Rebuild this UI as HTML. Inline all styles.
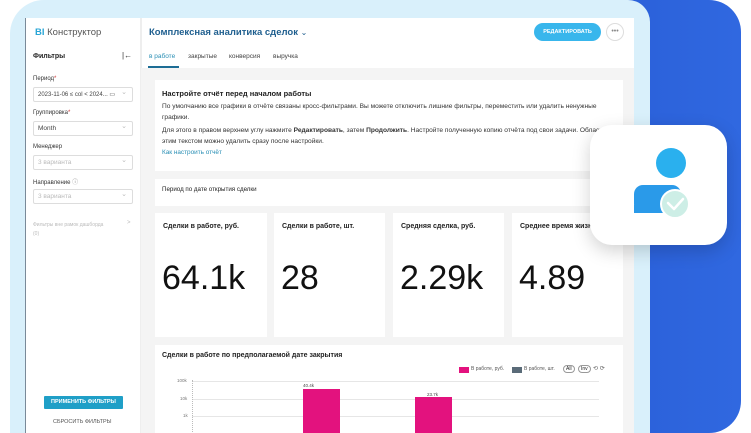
<!DOCTYPE html>
<html><head><meta charset="utf-8"><style>
*{margin:0;padding:0;box-sizing:border-box}
html,body{width:751px;height:433px;overflow:hidden}
body{background:#fff;font-family:"Liberation Sans","Noto Sans CJK SC",sans-serif;color:#222;position:relative}
.abs{position:absolute}
.blue{left:600px;top:0;width:141px;height:433px;background:linear-gradient(90deg,#2a5fd8,#3068e0);border-radius:0 32px 32px 0}
.frame{left:10px;top:0;width:640px;height:433px;background:#d9f0fb;border-radius:34px 22px 0 0}
.app{left:25px;top:18px;width:609px;height:415px;background:#fff;border-left:1px solid #7a8a99}
.side{left:25px;top:18px;width:116px;height:415px;border-right:1px solid #eee}
.main{left:141px;top:68px;width:493px;height:365px;background:#f4f4f4}
.card{background:#fff;position:absolute}
.lbl{font-size:6px;color:#333;position:absolute;left:33px}
.inp{position:absolute;left:33px;width:100px;height:15px;border:1px solid #ddd;border-radius:2px;font-size:6.5px;padding:3px 4px;color:#444}
.inp.g{color:#bbb}
.inp:after{content:"⌄";position:absolute;right:5px;top:0;color:#bbb;font-size:7px}
.kt{font-size:7px;font-weight:bold;position:absolute;left:8px;top:10px;white-space:nowrap}
.kv{font-size:34px;position:absolute;left:7px;top:46px;color:#111}
</style></head><body>
<div class="abs blue"></div>
<div class="abs frame"></div>
<div class="abs app"></div>
<div class="abs side"></div>
<div class="abs" style="left:35px;top:27px;font-size:9.5px;color:#555"><b style="color:#2aa6d6">BI</b> Конструктор</div>
<div class="abs" style="left:33px;top:53px;font-size:7px;font-weight:bold">Фильтры</div>
<div class="abs" style="left:122px;top:51px;font-size:8px;color:#333">|←</div>
<div class="lbl" style="top:76px">Период<span style="color:#c33">*</span></div>
<div class="inp" style="top:87px;font-size:6px">2023-11-06 ≤ col &lt; 2024... ▭</div>
<div class="lbl" style="top:110px">Группировка<span style="color:#c33">*</span></div>
<div class="inp" style="top:121px">Month</div>
<div class="lbl" style="top:144px">Менеджер</div>
<div class="inp g" style="top:155px">3 варианта</div>
<div class="lbl" style="top:177px">Направление <span style="color:#888">ⓘ</span></div>
<div class="inp g" style="top:189px">3 варианта</div>
<div class="abs" style="left:33px;top:221px;font-size:5px;color:#bbb;line-height:9px">Фильтры вне рамок дашборда<br>(0)</div>
<div class="abs" style="left:127px;top:220px;font-size:6px;color:#bbb">&gt;</div>
<div class="abs" style="left:44px;top:396px;width:79px;height:13px;background:#1f9fc7;color:#fff;font-size:5.5px;font-weight:bold;text-align:center;line-height:13px;border-radius:1px">ПРИМЕНИТЬ ФИЛЬТРЫ</div>
<div class="abs" style="left:53px;top:419px;font-size:5.5px;color:#555">СБРОСИТЬ ФИЛЬТРЫ</div>
<div class="abs" style="left:141px;top:18px;width:1px;height:50px;background:#eee"></div>
<div class="abs" style="left:149px;top:27px;font-size:9.5px;color:#1f5f8f;font-weight:bold">Комплексная аналитика сделок <span style="font-weight:normal;font-size:8px">⌄</span></div>
<div class="abs" style="left:534px;top:23px;width:67px;height:18px;background:#38b6ec;border-radius:9px;color:#fff;font-size:5.5px;font-weight:bold;text-align:center;line-height:18px">РЕДАКТИРОВАТЬ</div>
<div class="abs" style="left:606px;top:23px;width:18px;height:18px;border:1px solid #ddd;border-radius:50%;font-size:7px;color:#888;text-align:center;line-height:15px">•••</div>
<div class="abs" style="left:149px;top:53px;font-size:6.5px;color:#2a8fb5">в работе</div>
<div class="abs" style="left:148px;top:66px;width:31px;height:2px;background:#1d6d95"></div>
<div class="abs" style="left:188px;top:53px;font-size:6.5px;color:#444">закрытые</div>
<div class="abs" style="left:229px;top:53px;font-size:6.5px;color:#444">конверсия</div>
<div class="abs" style="left:273px;top:53px;font-size:6.5px;color:#444">выручка</div>
<div class="abs main"></div>
<div class="card" style="left:155px;top:80px;width:468px;height:91px">
<div style="position:absolute;left:7px;top:9px;font-size:7.5px;font-weight:bold">Настройте отчёт перед началом работы</div>
<div style="position:absolute;left:7px;top:21px;font-size:6.6px;line-height:11px;color:#333;white-space:nowrap">По умолчанию все графики в отчёте связаны кросс-фильтрами. Вы можете отключить лишние фильтры, переместить или удалить ненужные<br>графики.</div>
<div style="position:absolute;left:7px;top:45px;font-size:6.6px;line-height:11px;color:#333;white-space:nowrap">Для этого в правом верхнем углу нажмите <b>Редактировать</b>, затем <b>Продолжить</b>. Настройте полученную копию отчёта под свои задачи. Область с<br>этим текстом можно удалить сразу после настройки.</div>
<div style="position:absolute;left:7px;top:69px;font-size:6.4px;color:#2a8fb5">Как настроить отчёт</div>
</div>
<div class="card" style="left:155px;top:179px;width:468px;height:27px"><div style="position:absolute;left:7px;top:7px;font-size:6.2px">Период по дате открытия сделки</div></div>
<div class="card" style="left:155px;top:213px;width:112px;height:124px"><div class="kt">Сделки в работе, руб.</div><div class="kv">64.1k</div></div>
<div class="card" style="left:274px;top:213px;width:111px;height:124px"><div class="kt">Сделки в работе, шт.</div><div class="kv">28</div></div>
<div class="card" style="left:393px;top:213px;width:111px;height:124px"><div class="kt">Средняя сделка, руб.</div><div class="kv">2.29k</div></div>
<div class="card" style="left:512px;top:213px;width:111px;height:124px;overflow:hidden"><div class="kt">Среднее время жизн.</div><div class="kv">4.89</div></div>
<div class="card" style="left:155px;top:345px;width:468px;height:90px">
<div style="position:absolute;left:7px;top:7px;font-size:7px;font-weight:bold">Сделки в работе по предполагаемой дате закрытия</div>
<div style="position:absolute;left:304px;top:22px;width:10px;height:6px;background:#e3127e"></div>
<div style="position:absolute;left:316px;top:21px;font-size:5px;color:#555">В работе, руб.</div>
<div style="position:absolute;left:357px;top:22px;width:10px;height:6px;background:#5a6b78"></div>
<div style="position:absolute;left:369px;top:21px;font-size:5px;color:#555">В работе, шт.</div>
<div style="position:absolute;left:408px;top:20px;font-size:5px;border:1px solid #999;border-radius:5px;padding:0 2px">All</div>
<div style="position:absolute;left:423px;top:20px;font-size:5px;border:1px solid #999;border-radius:5px;padding:0 2px">Inv</div>
<div style="position:absolute;left:438px;top:20px;font-size:6px;color:#666">⟲ ⟳</div>
<div style="position:absolute;left:22px;top:33px;font-size:4.5px;color:#777">100k</div>
<div style="position:absolute;left:25px;top:51px;font-size:4.5px;color:#777">10k</div>
<div style="position:absolute;left:28px;top:68px;font-size:4.5px;color:#777">1k</div>
<div style="position:absolute;left:37px;top:36px;width:407px;height:1px;background:#e6e6e6"></div>
<div style="position:absolute;left:37px;top:54px;width:407px;height:1px;background:#e6e6e6"></div>
<div style="position:absolute;left:37px;top:71px;width:407px;height:1px;background:#e6e6e6"></div>
<div style="position:absolute;left:37px;top:35px;width:1px;height:60px;border-left:1px dotted #bbb"></div>
<div style="position:absolute;left:148px;top:38px;font-size:4.5px;color:#444">40.4k</div>
<div style="position:absolute;left:148px;top:44px;width:37px;height:50px;background:#e3127e"></div>
<div style="position:absolute;left:272px;top:47px;font-size:4.5px;color:#444">23.7k</div>
<div style="position:absolute;left:260px;top:52px;width:37px;height:40px;background:#e3127e"></div>
</div>
<div class="abs" style="left:590px;top:125px;width:137px;height:120px;background:#fff;border-radius:22px;box-shadow:0 6px 18px rgba(0,0,0,.18)">
<svg width="137" height="120" viewBox="0 0 137 120">
<circle cx="81" cy="38" r="15" fill="#2ab0ee"/>
<rect x="44" y="60" width="47" height="28" rx="9" fill="#2a9ae9"/>
<rect x="44" y="80" width="47" height="8" fill="#2a9ae9"/>
<circle cx="85" cy="79" r="14" fill="#cdeee6" stroke="#fff" stroke-width="2"/>
<path d="M78 78 L84 84 L93 74" stroke="#fff" stroke-width="2.5" fill="none" stroke-linecap="round" stroke-linejoin="round"/>
</svg>
</div>
</body></html>
